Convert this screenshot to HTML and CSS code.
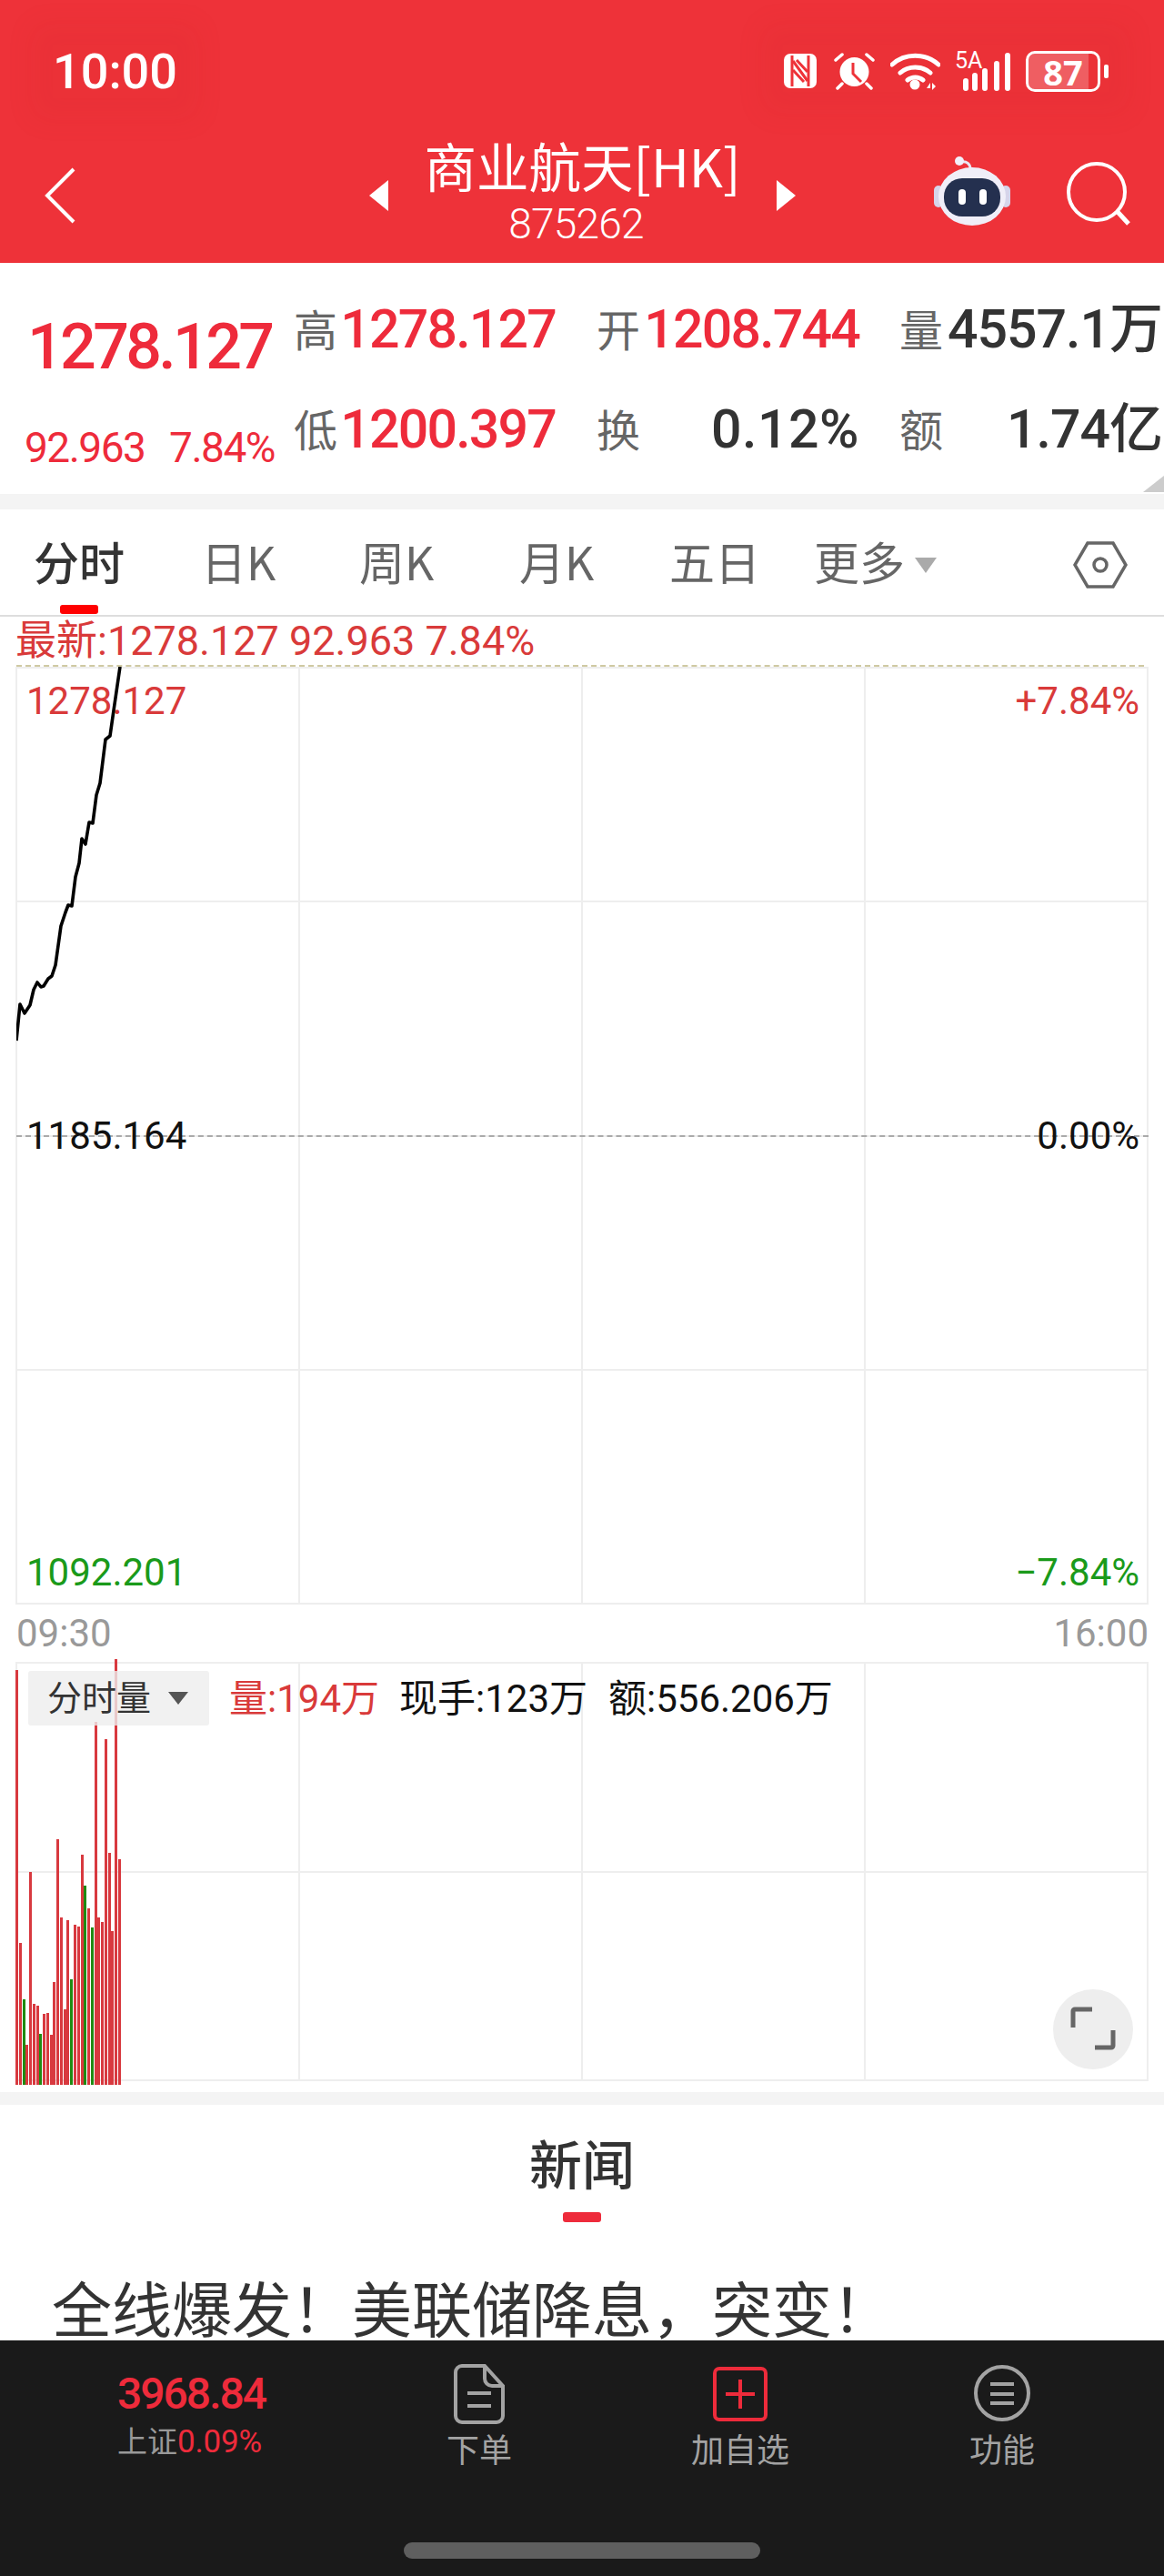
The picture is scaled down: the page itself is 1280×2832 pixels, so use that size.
FILE: index.html
```html
<!DOCTYPE html>
<html lang="zh-CN">
<head>
<meta charset="utf-8">
<title>商业航天[HK]</title>
<link rel="stylesheet" href="styles.css">
</head>
<body>
<div class="app">
  <header class="top">
    <div class="status">
      <span class="clock">10:00</span>
      <div class="status-icons">
        <svg class="ic-nfc" viewBox="0 0 38 40"><rect x="1" y="1" width="36" height="38" rx="7" fill="#fff"/><path d="M10 3v34M28 3v34" stroke="#ee3239" stroke-width="3" fill="none"/><path d="M11 9l16 22M11 19l12 13M27 21L15 8" stroke="#ee3239" stroke-width="3" fill="none"/></svg>
        <svg class="ic-alarm" viewBox="0 0 45 42"><circle cx="22.500" cy="22" r="16" fill="#fff"/><path d="M21 12v12l9 9" stroke="#ee3239" stroke-width="3" fill="none"/><path d="M2 9l7-6M43 9l-7-6M9 35l-5 5M36 35l5 5" stroke="#fff" stroke-width="3.500" stroke-linecap="round"/></svg>
        <svg class="ic-wifi" viewBox="0 0 55 41"><path d="M2 13c14-13 37-13 51 0M11 22c9-8 24-8 33 0M19 30c5-4 12-4 17 0" stroke="#fff" stroke-width="5" fill="none" stroke-linecap="round"/><circle cx="27" cy="35" r="5.500" fill="#fff"/><path d="M44 33l-4 6h4zM46 33v8l4-4z" fill="#fff"/></svg>
        <div class="signal">
          <span class="net">5A</span>
          <svg class="ic-bars" viewBox="0 0 54 42"><path d="M4 31v8M14 25v14M25 20v19M38 12v27M50 3v36" stroke="#fff" stroke-width="6" stroke-linecap="round"/></svg>
        </div>
        <div class="battery">
          <div class="cell"><span class="cell-fill"></span><span class="cell-num">87</span></div>
          <span class="nub"></span>
        </div>
      </div>
    </div>
    <div class="nav">
      <svg class="ic-back" viewBox="0 0 36 62"><path d="M33 2L4 31l29 29" stroke="#fff" stroke-width="4" fill="none"/></svg>
      <div class="nav-title">
        <span class="tri tri-left"></span>
        <div class="title-text">
          <div class="name">商业航天[HK]</div>
          <div class="code">875262</div>
        </div>
        <span class="tri tri-right"></span>
      </div>
      <div class="nav-tools">
        <svg class="ic-robot" viewBox="0 0 84 76">
          <path d="M40 14c0-6-4-9-10-8" stroke="#e8e6f2" stroke-width="3" fill="none"/>
          <circle cx="28" cy="5" r="5" fill="#f2effa"/>
          <rect x="0" y="32" width="10" height="24" rx="5" fill="#d6d4ea"/>
          <rect x="74" y="32" width="10" height="24" rx="5" fill="#d6d4ea"/>
          <ellipse cx="42" cy="44" rx="37" ry="32" fill="#f0eef8"/>
          <rect x="11" y="24" width="62" height="42" rx="20" fill="#24304f"/>
          <rect x="27" y="36" width="8" height="17" rx="4" fill="#fff"/>
          <rect x="50" y="36" width="8" height="17" rx="4" fill="#fff"/>
        </svg>
        <svg class="ic-search" viewBox="0 0 70 70"><circle cx="33" cy="33" r="31" stroke="#fff" stroke-width="4" fill="none"/><path d="M56 55l12 13" stroke="#fff" stroke-width="5"/></svg>
      </div>
    </div>
  </header>

  <section class="quote">
    <div class="last">
      <div class="last-price">1278.127</div>
      <div class="last-change"><span>92.963</span><span>7.84%</span></div>
    </div>
    <div class="stats">
      <div class="stat s1"><span class="k">高</span><span class="v up">1278.127</span></div>
      <div class="stat s2"><span class="k">开</span><span class="v up">1208.744</span></div>
      <div class="stat s3"><span class="k">量</span><span class="v loose">4557.1万</span></div>
      <div class="stat s1"><span class="k">低</span><span class="v up">1200.397</span></div>
      <div class="stat s2"><span class="k">换</span><span class="v wide">0.12%</span></div>
      <div class="stat s3"><span class="k">额</span><span class="v loose">1.74亿</span></div>
    </div>
    <span class="corner"></span>
  </section>

  <nav class="tabs">
    <span class="tab on">分时<i class="tab-mark"></i></span>
    <span class="tab t2">日K</span>
    <span class="tab t3">周K</span>
    <span class="tab t4">月K</span>
    <span class="tab t5">五日</span>
    <span class="tab t6">更多<i class="tab-caret"></i></span>
    <svg class="ic-hex" viewBox="0 0 60 52"><path d="M16 2h28l14 24-14 24H16L2 26z" stroke="#666" stroke-width="3.500" fill="none"/><circle cx="30" cy="26" r="7" stroke="#666" stroke-width="3.500" fill="none"/></svg>
  </nav>

  <section class="charts">
    <div class="latest">最新:1278.127 92.963 7.84%</div>
    <div class="price-chart">
      <div class="grid grid-4">
        <i></i><i></i><i></i><i></i><i></i><i></i><i></i><i></i>
        <i></i><i></i><i></i><i></i><i></i><i></i><i></i><i></i>
      </div>
      <span class="hi-line"></span>
      <span class="mid-line"></span>
      <span class="lab l-tl red">1278.127</span>
      <span class="lab l-tr red">+7.84%</span>
      <span class="lab l-ml">1185.164</span>
      <span class="lab l-mr">0.00%</span>
      <span class="lab l-bl green">1092.201</span>
      <span class="lab l-br green">−7.84%</span>
      <svg class="trend" viewBox="0 0 1245 1030" width="1245" height="1030"><polyline fill="none" stroke="#000" stroke-width="3.600" stroke-linejoin="round" points="0,411 4,371 9,381 15,372 19,355 23,347 27,352 30,351 35,343 39,340 43,328 49,285 54,270 57,262 61,263 65,231 69,216 72,189 76,195 80,171 84,172 88,141 92,128 98,80 103,76 107,48 114,0"/></svg>
    </div>
    <div class="times"><span>09:30</span><span>16:00</span></div>
    <div class="vol-chart">
      <div class="grid grid-2">
        <i></i><i></i><i></i><i></i><i></i><i></i><i></i><i></i>
      </div>
      <div class="bars" id="bars">
        <i style="height:456px"></i><i style="height:156px"></i><i class="g" style="height:94px"></i><i style="height:44px"></i><i style="height:234px"></i><i style="height:89px"></i><i style="height:87px"></i><i class="g" style="height:56px"></i><i style="height:78px"></i><i style="height:79px"></i><i style="height:55px"></i><i style="height:113px"></i><i style="height:270px"></i><i style="height:184px"></i><i style="height:83px"></i><i style="height:181px"></i><i class="g" style="height:116px"></i><i style="height:176px"></i><i style="height:174px"></i><i style="height:253px"></i><i class="g" style="height:219px"></i><i style="height:194px"></i><i class="g" style="height:173px"></i><i style="height:399px"></i><i style="height:184px"></i><i style="height:179px"></i><i style="height:380px"></i><i style="height:255px"></i><i style="height:169px"></i><i style="height:468px"></i><i style="height:248px"></i>
      </div>
      <div class="vol-head">
        <span class="chip">分时量<i class="chip-caret"></i></span>
        <span class="red">量:194万</span>
        <span class="vol-now">现手:123万</span>
        <span class="vol-amt">额:556.206万</span>
      </div>
      <span class="expand">
        <svg viewBox="0 0 88 88"><path d="M22 42V24a2 2 0 0 1 2-2h19M66 45v17a2 2 0 0 1-2 2H46" stroke="#666" stroke-width="5" fill="none"/></svg>
      </span>
    </div>
  </section>

  <section class="news">
    <h2 class="news-title">新闻</h2>
    <i class="news-mark"></i>
    <p class="headline">全线爆发！美联储降息，突变！</p>
  </section>

  <footer class="dock">
    <div class="dock-row">
      <div class="index">
        <div class="index-val">3968.84</div>
        <div class="index-sub">上证<span>0.09%</span></div>
      </div>
      <div class="dock-item d-order">
        <svg viewBox="0 0 56 66"><path d="M9 2h25l20 22v33a7 7 0 0 1-7 7H9a7 7 0 0 1-7-7V9a7 7 0 0 1 7-7z" stroke="#a3a3a3" stroke-width="4" fill="none"/><path d="M34 2v14a8 8 0 0 0 8 8h12M15 32h26M15 46h26" stroke="#a3a3a3" stroke-width="4" fill="none"/></svg>
        <span>下单</span>
      </div>
      <div class="dock-item d-add">
        <svg viewBox="0 0 60 60"><rect x="2" y="2" width="56" height="56" rx="5" stroke="#ee2b3b" stroke-width="4" fill="none"/><path d="M30 14v32M14 30h32" stroke="#ee2b3b" stroke-width="4"/></svg>
        <span>加自选</span>
      </div>
      <div class="dock-item d-menu">
        <svg viewBox="0 0 62 62"><circle cx="31" cy="31" r="29" stroke="#a3a3a3" stroke-width="4" fill="none"/><path d="M18 21h26M18 32h26M18 42h26" stroke="#a3a3a3" stroke-width="4"/></svg>
        <span>功能</span>
      </div>
    </div>
    <span class="home"></span>
  </footer>
</div>
</body>
</html>
```
FILE: styles.css
```css
* { box-sizing: border-box; }
html, body { margin: 0; padding: 0; }
body {
  width: 1280px;
  background: #fff;
  font-family: Roboto, "Noto Sans CJK SC", sans-serif;
  color: #333;
}
i { font-style: normal; display: block; }
.app { width: 1280px; height: 2832px; overflow: hidden; display: flex; flex-direction: column; }

/* Red header */
.top { height: 289px; background: #ee3239; color: #fff; flex: none; }
.status { height: 132px; padding: 50px 61px 0 58px; display: flex; justify-content: space-between; align-items: flex-start; }
.clock { font-size: 54px; line-height: 58px; font-weight: 500; background: rgba(190,30,40,.06); box-shadow: 0 0 30px 24px rgba(190,30,40,.06); }
.status-icons { display: flex; align-items: flex-start; padding-top: 8px; background: rgba(190,30,40,.06); box-shadow: 0 0 30px 24px rgba(190,30,40,.06); }
.ic-nfc { width: 38px; height: 40px; }
.ic-alarm { width: 45px; height: 42px; margin-left: 18px; margin-top: -1px; }
.ic-wifi { width: 55px; height: 41px; margin-left: 17px; }
.signal { position: relative; width: 61px; height: 42px; margin-left: 16px; }
.net { position: absolute; left: 0; top: -5px; font-size: 25px; line-height: 28px; }
.ic-bars { position: absolute; left: 8px; top: 0; width: 54px; height: 42px; }
.battery { display: flex; align-items: center; margin-left: 17px; margin-top: -2px; }
.cell { position: relative; width: 82px; height: 45px; border: 3px solid #fff; border-radius: 10px; display: flex; align-items: center; justify-content: center; }
.cell-fill { position: absolute; left: 0; top: 0; bottom: 0; width: 87%; background: rgba(255,255,255,.22); border-radius: 7px 0 0 7px; }
.cell-num { position: relative; font-size: 38px; font-weight: 700; line-height: 36px; font-family: "Noto Sans", sans-serif; }
.nub { width: 5px; height: 15px; background: #fff; border-radius: 2px; margin-left: 4px; }

.nav { height: 157px; position: relative; display: flex; justify-content: space-between; }
.ic-back { width: 36px; height: 62px; margin: 52px 0 0 48px; }
.nav-title { position: absolute; left: 406px; top: 19px; width: 469px; display: flex; align-items: center; justify-content: space-between; }
.tri { width: 0; height: 0; border-top: 17px solid transparent; border-bottom: 17px solid transparent; margin-top: 15px; }
.tri-left { border-right: 21px solid #fff; }
.tri-right { border-left: 21px solid #fff; }
.title-text { text-align: center; }
.name { font-family: "Noto Sans CJK SC", sans-serif; font-size: 57.500px; line-height: 60px; font-weight: 400; white-space: nowrap; }
.code { font-size: 46px; line-height: 36px; font-weight: 300; letter-spacing: -0.800px; margin-top: 17px; margin-right: 14px; }
.nav-tools { display: flex; align-items: flex-start; padding: 40px 37px 0 0; }
.ic-robot { width: 84px; height: 76px; }
.ic-search { width: 70px; height: 70px; margin-left: 62px; margin-top: 6px; }

/* Quote summary */
.quote { height: 254px; flex: none; position: relative; display: flex; background: #fff; }
.last { width: 324px; flex: none; padding: 56px 0 0 27px; }
.last-price { font-size: 70px; line-height: 72px; font-weight: 500; color: #ee2b3b; letter-spacing: -3.700px; margin-left: 3px; }
.last-change { display: flex; justify-content: space-between; width: 275px; margin-top: 51px; font-size: 46px; line-height: 48px; color: #ee2b3b; letter-spacing: -1.500px; }
.stats { flex: 1; display: grid; grid-template-columns: 333px 333px 1fr; grid-template-rows: 110px 110px; padding-top: 47px; }
.stat { display: flex; justify-content: space-between; align-items: center; height: 48px; }
.s1 { width: 287px; }
.s2 { width: 288px; }
.s3 { width: 288px; }
.k { font-family: "Noto Sans CJK SC", sans-serif; font-size: 48px; color: #666; line-height: 48px; margin-left: -1px; }
.v { font-size: 59px; line-height: 48px; padding-top: 3px; font-weight: 500; color: #333; letter-spacing: -1.800px; font-family: Roboto, "Noto Sans CJK SC", sans-serif; }
.v.up { color: #ee2b3b; }
.v.wide { letter-spacing: 0.500px; }
.v.loose { letter-spacing: -1px; }
.corner { position: absolute; right: 0; bottom: 2px; width: 0; height: 0; border-left: 23px solid transparent; border-bottom: 18px solid #ccc; }

/* Period tabs */
.tabs { margin-top: 17px; height: 118px; flex: none; position: relative; display: flex; border-bottom: 2px solid #ddd; font-family: "Noto Sans CJK SC", sans-serif; color: #666; font-size: 50px; }
.tabs::before { content: ""; position: absolute; left: 0; right: 0; top: -17px; height: 17px; background: #f4f4f4; }
.tab { position: absolute; top: 28px; line-height: 56px; white-space: nowrap; }
.tab.on { left: 37px; color: #333; font-weight: 500; }
.t2 { left: 221px; }
.t3 { left: 395px; }
.t4 { left: 571px; }
.t5 { left: 736px; }
.t6 { left: 895px; }
.tab-mark { position: absolute; left: 29px; top: 77px; width: 42px; height: 10px; background: #f00; border-radius: 3px; }
.tab-caret { position: absolute; left: 111px; top: 25px; width: 0; height: 0; border-left: 12px solid transparent; border-right: 12px solid transparent; border-top: 17px solid #aaa; }
.ic-hex { position: absolute; left: 1180px; top: 35px; width: 60px; height: 52px; }

/* Charts */
.charts { height: 1622px; flex: none; padding: 0 17px 0 18px; position: relative; }
.latest { height: 55px; padding-top: 3px; font-family: Roboto, "Noto Sans CJK SC", sans-serif; font-size: 45px; line-height: 48px; color: #d93a3a; white-space: nowrap; margin-left: -1px; }
.price-chart { position: relative; height: 1031px; }
.grid { position: absolute; inset: 0 0 0 -1px; display: grid; grid-template-columns: repeat(4, 1fr); border-top: 2px solid #eee; border-left: 2px solid #eee; }
.grid i { border-right: 2px solid #eee; border-bottom: 2px solid #eee; }
.grid-4 { grid-template-rows: repeat(4, 1fr); }
.grid-2 { grid-template-rows: repeat(2, 1fr); }
.hi-line { position: absolute; left: 0; right: 5px; top: -2px; border-top: 2px dashed #cfc9a2; }
.mid-line { position: absolute; left: 0; right: 0; top: 515px; border-top: 2px dashed #aaa; }
.lab { position: absolute; font-size: 42px; line-height: 48px; white-space: nowrap; color: #111; }
.red { color: #d93a3a; }
.green { color: #1a9a1a; }
.lab.red { color: #d93a3a; }
.lab.green { color: #1a9a1a; }
.l-tl, .l-ml, .l-bl { left: 11px; }
.l-tr, .l-mr, .l-br { right: 10px; }
.l-tl, .l-tr { top: 14px; }
.l-ml, .l-mr { top: 492px; }
.l-bl, .l-br { top: 972px; }
.trend { position: absolute; left: 0; top: 0; }
.times { height: 63px; display: flex; justify-content: space-between; align-items: center; font-size: 42px; color: #999; }
.vol-chart { position: relative; height: 461px; }
.bars { position: absolute; left: -1px; top: 0; height: 465px; display: flex; align-items: flex-end; gap: 0.770px; }
.bars i { width: 3px; background: #d8393f; flex: none; }
.bars i.g { background: #1f8a12; }
.vol-head { position: absolute; left: 13px; top: 10px; display: flex; align-items: center; height: 60px; font-family: Roboto, "Noto Sans CJK SC", sans-serif; font-size: 42px; color: #111; white-space: nowrap; }
.vol-head span { padding-bottom: 8px; }
.chip { width: 199px; height: 60px; background: rgba(238,238,238,.8); border-radius: 3px; color: #333; font-size: 38px; display: flex; align-items: center; padding-left: 21px; position: relative; margin-right: 22px; }
.chip-caret { position: absolute; left: 154px; top: 23px; width: 0; height: 0; border-left: 11px solid transparent; border-right: 11px solid transparent; border-top: 14px solid #555; }
.vol-now { margin-left: 22px; }
.vol-amt { margin-left: 23px; }
.expand { position: absolute; right: 17px; top: 360px; width: 88px; height: 88px; border-radius: 50%; background: #eee; }
.expand svg { display: block; width: 88px; height: 88px; }

/* News */
.news { height: 273px; flex: none; border-top: 14px solid #f4f4f4; background: #fff; position: relative; overflow: hidden; }
.news-title { margin: 0; padding-top: 28px; text-align: center; font-family: "Noto Sans CJK SC", sans-serif; font-size: 58px; line-height: 70px; font-weight: 500; color: #333; }
.news-mark { width: 42px; height: 11px; background: #ee2b3b; border-radius: 3px; margin: 20px auto 0; }
.headline { margin: 52px 0 0 57px; font-family: "Noto Sans CJK SC", sans-serif; font-size: 66px; line-height: 80px; color: #333; white-space: nowrap; }

/* Dark dock */
.dock { flex: 1; background: #1a1a1a; position: relative; }
.dock-row { position: relative; height: 150px; }
.index { position: absolute; left: 129px; top: 34px; width: 160px; }
.index-val { font-size: 48px; line-height: 50px; font-weight: 500; color: #ee2b3b; letter-spacing: -2px; white-space: nowrap; }
.index-sub { font-family: "Noto Sans CJK SC", sans-serif; font-size: 33px; line-height: 40px; color: #999; margin-top: 5px; white-space: nowrap; }
.index-sub span { color: #ee2b3b; font-family: Roboto, sans-serif; font-size: 35px; letter-spacing: -0.200px; }
.dock-item { position: absolute; top: 26px; display: flex; flex-direction: column; align-items: center; color: #a3a3a3; font-family: "Noto Sans CJK SC", sans-serif; font-size: 36px; line-height: 44px; white-space: nowrap; }
.dock-item svg { display: block; margin-bottom: 4px; }
.d-order { left: 491px; width: 72px; }
.d-order svg { width: 56px; height: 66px; }
.d-add { left: 760px; width: 108px; top: 29px; }
.d-add svg { width: 60px; height: 60px; margin-bottom: 7px; }
.d-menu { left: 1066px; width: 72px; top: 27px; }
.d-menu svg { width: 62px; height: 62px; margin-bottom: 7px; }
.home { position: absolute; left: 444px; top: 222px; width: 392px; height: 18px; border-radius: 9px; background: #5f5f5f; }
```
